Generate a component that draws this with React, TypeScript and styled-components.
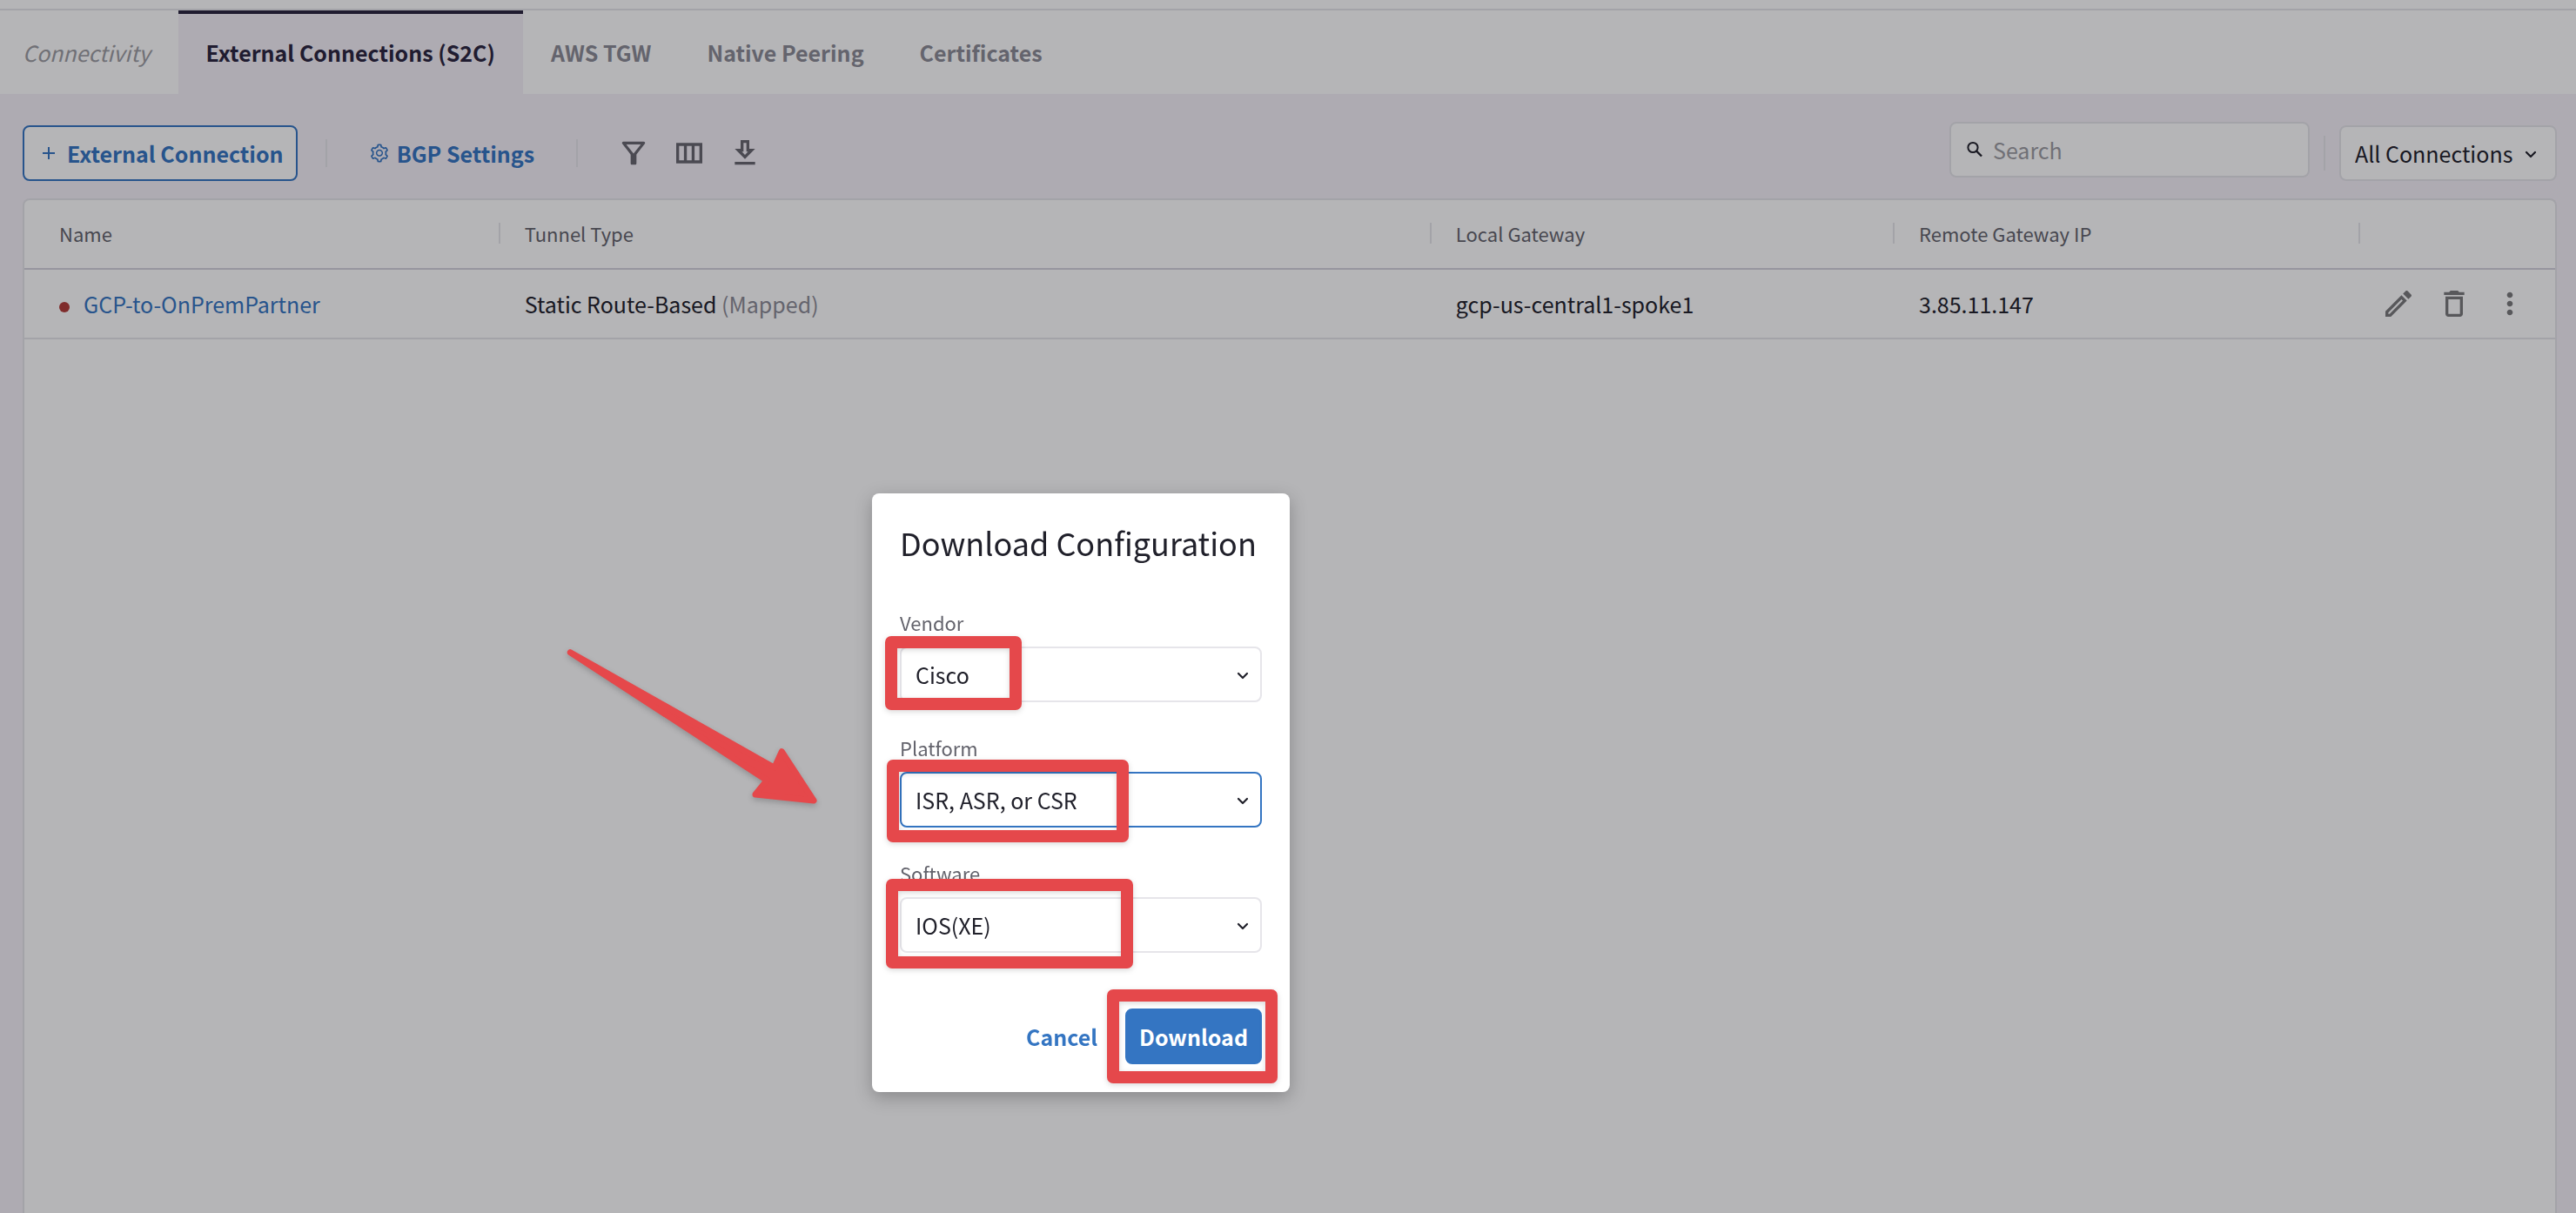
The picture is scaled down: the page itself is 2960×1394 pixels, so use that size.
import React from "react";
import styled, { createGlobalStyle } from "styled-components";
import { AiOutlineSetting } from "react-icons/ai";

const color = {
  ink: "#20202a",
  heading: "#2a253e",
  muted: "#63636c",
  tab: "#8c8b95",
  faint: "#9c9ca2",
  line: "#e6e5ea",
  strongLine: "#d3d2dc",
  canvas: "#f5f1f8",
  blue: "#3475c2",
  red: "#b23c38",
  mark: "#e5484b",
};

const GlobalStyle = createGlobalStyle`
  *, *::before, *::after { box-sizing: border-box; }
  body {
    margin: 0;
    background: ${color.canvas};
    color: ${color.ink};
    font-family: "Noto Sans CJK SC", "Noto Sans", sans-serif;
    font-size: 25px;
    line-height: 32px;
  }
  button, input, select { font: inherit; color: inherit; margin: 0; }
  button { cursor: pointer; }
`;

const Page = styled.div`
  display: flex;
  flex-direction: column;
  min-height: 100vh;
`;

const TopBar = styled.header`
  height: 12px;
  background: #fff;
  border-bottom: 2px solid ${color.line};
`;

const TabBar = styled.nav`
  display: flex;
  align-items: stretch;
  height: 96px;
  background: #fff;
`;

const Section = styled.span`
  display: flex;
  align-items: center;
  padding: 0 32px 0 26px;
  color: ${color.faint};
  font-style: italic;
`;

const Tab = styled.a<{ $active?: boolean }>`
  display: flex;
  align-items: center;
  padding: 0 32px;
  border-top: 4px solid ${(p) => (p.$active ? color.heading : "transparent")};
  border-bottom: 4px solid transparent;
  background: ${(p) => (p.$active ? color.canvas : "transparent")};
  color: ${(p) => (p.$active ? color.heading : color.tab)};
  font-weight: 600;
  text-decoration: none;
`;

const Main = styled.main`
  display: flex;
  flex: 1;
  flex-direction: column;
  padding: 36px 22px 0 26px;
`;

const Toolbar = styled.div`
  display: flex;
  align-items: center;
  justify-content: space-between;
  height: 64px;
  margin-bottom: 20px;
`;

const Group = styled.div<{ $gap: number }>`
  display: flex;
  align-items: center;
  gap: ${(p) => p.$gap}px;
`;

const Button = styled.button<{ $kind: "outline" | "text" | "primary" }>`
  display: inline-flex;
  align-items: center;
  gap: 8px;
  height: 64px;
  padding: 0 14px;
  border: 2px solid ${(p) => (p.$kind === "text" ? "transparent" : color.blue)};
  border-radius: 8px;
  background: ${(p) =>
    p.$kind === "primary" ? color.blue : p.$kind === "outline" ? "#fff" : "transparent"};
  color: ${(p) => (p.$kind === "primary" ? "#fff" : color.blue)};
  font-weight: 600;
  white-space: nowrap;
`;

const Divider = styled.span<{ $height: number }>`
  width: 2px;
  height: ${(p) => p.$height}px;
  background: ${color.line};
`;

const IconGroup = styled(Group)`
  padding-left: 12px;
`;

const IconButton = styled.button<{ $soft?: boolean }>`
  display: flex;
  width: 40px;
  height: 40px;
  padding: 0;
  border: 0;
  background: none;
  color: ${(p) => (p.$soft ? "#7a7a7c" : "#67666f")};
`;

const SearchBox = styled.label`
  display: flex;
  align-items: center;
  gap: 12px;
  width: 414px;
  height: 64px;
  margin-bottom: 8px;
  padding: 0 16px;
  border: 2px solid ${color.line};
  border-radius: 8px;
  background: #fff;
`;

const SearchInput = styled.input`
  flex: 1;
  min-width: 0;
  padding: 0;
  border: 0;
  outline: 0;
  background: none;
  &::placeholder { color: ${color.faint}; opacity: 1; }
`;

const SelectBox = styled.div`
  position: relative;
  display: flex;
`;

const Select = styled.select<{ $focused?: boolean }>`
  flex: 1;
  height: 64px;
  padding: 0 48px 0 16px;
  border: 2px solid ${(p) => (p.$focused ? color.blue : color.line)};
  border-radius: 8px;
  outline: 0;
  appearance: none;
  background: #fff;
`;

const Chevron = styled.svg<{ $right: number }>`
  position: absolute;
  top: 24px;
  right: ${(p) => p.$right}px;
  width: 16px;
  height: 16px;
  pointer-events: none;
`;

const Card = styled.section`
  flex: 1;
  border: 2px solid ${color.line};
  border-bottom: 0;
  border-radius: 8px 8px 0 0;
  background: #fff;
`;

const Table = styled.table`
  width: 100%;
  table-layout: fixed;
  border-collapse: separate;
  border-spacing: 0;
`;

const Col = styled.col<{ $width?: string }>`
  width: ${(p) => p.$width ?? "auto"};
`;

const HeadCell = styled.th`
  height: 80px;
  padding: 0 0 2px;
  border-bottom: 2px solid ${color.strongLine};
  color: ${color.muted};
  font-size: 22px;
  font-weight: 400;
  text-align: left;
`;

const HeadLabel = styled.div<{ $first?: boolean; $last?: boolean }>`
  height: 24px;
  padding-left: ${(p) => (p.$first ? 40 : 28)}px;
  border-right: ${(p) => (p.$last ? 0 : 2)}px solid ${color.line};
  line-height: 24px;
`;

const Cell = styled.td`
  height: 80px;
  padding: 0 0 0 28px;
  border-bottom: 2px solid ${color.line};
  &:first-child { padding-left: 40px; }
`;

const NameCell = styled.div`
  display: flex;
  align-items: center;
  gap: 16px;
`;

const StatusDot = styled.span`
  width: 12px;
  height: 12px;
  margin-top: 8px;
  border-radius: 50%;
  background: ${color.red};
`;

const NameLink = styled.a`
  color: ${color.blue};
  text-decoration: none;
`;

const Hint = styled.span`
  color: ${color.tab};
`;

const Actions = styled.div`
  display: flex;
  justify-content: flex-end;
  gap: 24px;
  padding-right: 32px;
`;

const Overlay = styled.div`
  position: fixed;
  inset: 0;
  display: flex;
  align-items: flex-start;
  justify-content: center;
  padding: 567px 476px 0 0;
  background: rgba(10, 10, 15, 0.3);
`;

const Dialog = styled.form`
  display: flex;
  flex-direction: column;
  width: 480px;
  padding: 32px;
  border-radius: 8px;
  background: #fff;
  box-shadow: 0 6px 20px rgba(0, 0, 0, 0.25);
`;

const Title = styled.h2`
  margin: 0 0 52px;
  font-size: 36px;
  font-weight: 400;
  line-height: 48px;
  white-space: nowrap;
`;

const Field = styled.div`
  display: flex;
  flex-direction: column;
  gap: 12px;
  margin-bottom: 36px;
`;

const Label = styled.label`
  color: ${color.muted};
  font-size: 22px;
  line-height: 32px;
`;

const Footer = styled.footer`
  display: flex;
  justify-content: flex-end;
  gap: 16px;
  margin-top: 28px;
`;

const ButtonBox = styled.div`
  position: relative;
`;

const Mark = styled.span<{ $x: number; $y: number; $w: number; $h: number }>`
  position: absolute;
  z-index: 1;
  left: ${(p) => p.$x}px;
  top: ${(p) => p.$y}px;
  width: ${(p) => p.$w}px;
  height: ${(p) => p.$h}px;
  border: 14px solid ${color.mark};
  border-radius: 7px;
  filter: drop-shadow(0 2px 3px rgba(0, 0, 0, 0.15));
  pointer-events: none;
`;

const Arrow = styled.svg`
  position: absolute;
  left: 640px;
  top: 736px;
  width: 310px;
  height: 200px;
  filter: drop-shadow(0 3px 3px rgba(0, 0, 0, 0.2));
  pointer-events: none;
`;

const icons = {
  filter:
    "M7 6h10l-5.01 6.3L7 6zm-2.75-.39C6.27 8.2 10 13 10 13v6c0 .55.45 1 1 1h2c.55 0 1-.45 1-1v-6s3.72-4.8 5.74-7.39A.998.998 0 0 0 18.95 4H5.04c-.83 0-1.3.95-.79 1.61z",
  columns:
    "M3 5v14h18V5H3zm5.33 12H5V7h3.33v10zm5.34 0h-3.33V7h3.33v10zM19 17h-3.33V7H19v10z",
  download:
    "M19 9h-4V3H9v6H5l7 7 7-7zm-8 2V5h2v6h1.17L12 13.17 9.83 11H11zm-6 7h14v2H5v-2z",
  edit:
    "M14.06 9.02l.92.92L5.92 19H5v-.92l9.06-9.06M17.66 3c-.25 0-.51.1-.7.29l-1.83 1.83 3.75 3.75 1.83-1.83c.39-.39.39-1.02 0-1.41l-2.34-2.34c-.2-.2-.45-.29-.71-.29zm-3.6 3.19L3 17.25V21h3.75L17.81 9.94l-3.75-3.75z",
  trash:
    "M6 19c0 1.1.9 2 2 2h8c1.1 0 2-.9 2-2V7H6v12zM8 9h8v10H8V9zm7.5-5l-1-1h-5l-1 1H5v2h14V4h-3.5z",
  more:
    "M12 8c1.1 0 2-.9 2-2s-.9-2-2-2-2 .9-2 2 .9 2 2 2zm0 2c-1.1 0-2 .9-2 2s.9 2 2 2 2-.9 2-2-.9-2-2-2zm0 6c-1.1 0-2 .9-2 2s.9 2 2 2 2-.9 2-2-.9-2-2-2z",
};

function Icon({ name }: { name: keyof typeof icons }) {
  return (
    <svg width="40" height="40" viewBox="0 0 24 24" fill="currentColor" aria-hidden="true">
      <path d={icons[name]} />
    </svg>
  );
}

function DownIcon({ right = 14 }: { right?: number }) {
  return (
    <Chevron $right={right} viewBox="0 0 16 16" aria-hidden="true">
      <path
        d="M3 7l5 5 5-5"
        fill="none"
        stroke={color.ink}
        strokeWidth="2.2"
        strokeLinecap="round"
        strokeLinejoin="round"
      />
    </Chevron>
  );
}

const fields = [
  { id: "vendor", label: "Vendor", value: "Cisco", mark: [-17, -12, 157, 85] },
  { id: "platform", label: "Platform", value: "ISR, ASR, or CSR", focused: true, mark: [-15, -14, 278, 95] },
  { id: "software", label: "Software", value: "IOS(XE)", mark: [-16, -21, 284, 103] },
];

const columns = [
  { label: "Name", width: "18.8%" },
  { label: "Tunnel Type", width: "36.8%" },
  { label: "Local Gateway", width: "18.3%" },
  { label: "Remote Gateway IP", width: "18.4%" },
  { label: "" },
];

export default function App() {
  return (
    <>
      <GlobalStyle />
      <Page>
        <TopBar />
        <TabBar aria-label="Connectivity">
          <Section>Connectivity</Section>
          <Tab href="#s2c" $active aria-current="page">External Connections (S2C)</Tab>
          <Tab href="#tgw">AWS TGW</Tab>
          <Tab href="#peering">Native Peering</Tab>
          <Tab href="#certificates">Certificates</Tab>
        </TabBar>
        <Main>
          <Toolbar>
            <Group $gap={32}>
              <Button type="button" $kind="outline">
                <svg width="27" height="28" viewBox="0 0 27 28" stroke="currentColor" strokeWidth="2" aria-hidden="true">
                  <path d="M14 7v14M7 14h14" />
                </svg>
                External Connection
              </Button>
              <Divider $height={32} />
              <Button type="button" $kind="text">
                <AiOutlineSetting size={24} />
                BGP Settings
              </Button>
              <Divider $height={32} />
              <IconGroup $gap={24}>
                <IconButton type="button" aria-label="Filter"><Icon name="filter" /></IconButton>
                <IconButton type="button" aria-label="Columns"><Icon name="columns" /></IconButton>
                <IconButton type="button" aria-label="Export"><Icon name="download" /></IconButton>
              </IconGroup>
            </Group>
            <Group $gap={16}>
              <SearchBox>
                <svg width="20" height="20" viewBox="0 0 20 20" fill="none" stroke={color.ink} aria-hidden="true">
                  <circle cx="9" cy="7.5" r="5.6" strokeWidth="2" />
                  <path d="M13 11.5l6 6" strokeWidth="2.4" />
                </svg>
                <SearchInput type="search" placeholder="Search" aria-label="Search" />
              </SearchBox>
              <Divider $height={40} />
              <SelectBox>
                <Select aria-label="Connection filter">
                  <option>All Connections</option>
                </Select>
                <DownIcon right={22} />
              </SelectBox>
            </Group>
          </Toolbar>
          <Card>
            <Table>
              <colgroup>
                {columns.map((c) => <Col key={c.label} $width={c.width} />)}
              </colgroup>
              <thead>
                <tr>
                  {columns.map((c, i) => (
                    <HeadCell key={c.label} scope="col">
                      <HeadLabel $first={i === 0} $last={i === columns.length - 1}>{c.label}</HeadLabel>
                    </HeadCell>
                  ))}
                </tr>
              </thead>
              <tbody>
                <tr>
                  <Cell>
                    <NameCell>
                      <StatusDot />
                      <NameLink href="#connection">GCP-to-OnPremPartner</NameLink>
                    </NameCell>
                  </Cell>
                  <Cell>Static Route-Based <Hint>(Mapped)</Hint></Cell>
                  <Cell>gcp-us-central1-spoke1</Cell>
                  <Cell>3.85.11.147</Cell>
                  <Cell>
                    <Actions>
                      <IconButton type="button" $soft aria-label="Edit"><Icon name="edit" /></IconButton>
                      <IconButton type="button" $soft aria-label="Delete"><Icon name="trash" /></IconButton>
                      <IconButton type="button" $soft aria-label="More"><Icon name="more" /></IconButton>
                    </Actions>
                  </Cell>
                </tr>
              </tbody>
            </Table>
          </Card>
        </Main>
      </Page>
      <Overlay>
        <Dialog role="dialog" aria-labelledby="dialog-title">
          <Title id="dialog-title">Download Configuration</Title>
          {fields.map((f) => (
            <Field key={f.id}>
              <Label htmlFor={f.id}>{f.label}</Label>
              <SelectBox>
                <Select id={f.id} $focused={f.focused}>
                  <option>{f.value}</option>
                </Select>
                <DownIcon />
                <Mark $x={f.mark[0]} $y={f.mark[1]} $w={f.mark[2]} $h={f.mark[3]} />
              </SelectBox>
            </Field>
          ))}
          <Footer>
            <Button type="button" $kind="text">Cancel</Button>
            <ButtonBox>
              <Button type="button" $kind="primary">Download</Button>
              <Mark $x={-21} $y={-22} $w={196} $h={108} />
            </ButtonBox>
          </Footer>
        </Dialog>
        <Arrow viewBox="640 736 310 200" aria-hidden="true">
          <path
            d="M655.3 749.7L889.9 882.2L898.3 863.7L935 920L868 913L881.2 896.8Z"
            fill={color.mark}
            stroke={color.mark}
            strokeWidth="7"
            strokeLinejoin="round"
          />
        </Arrow>
      </Overlay>
    </>
  );
}
